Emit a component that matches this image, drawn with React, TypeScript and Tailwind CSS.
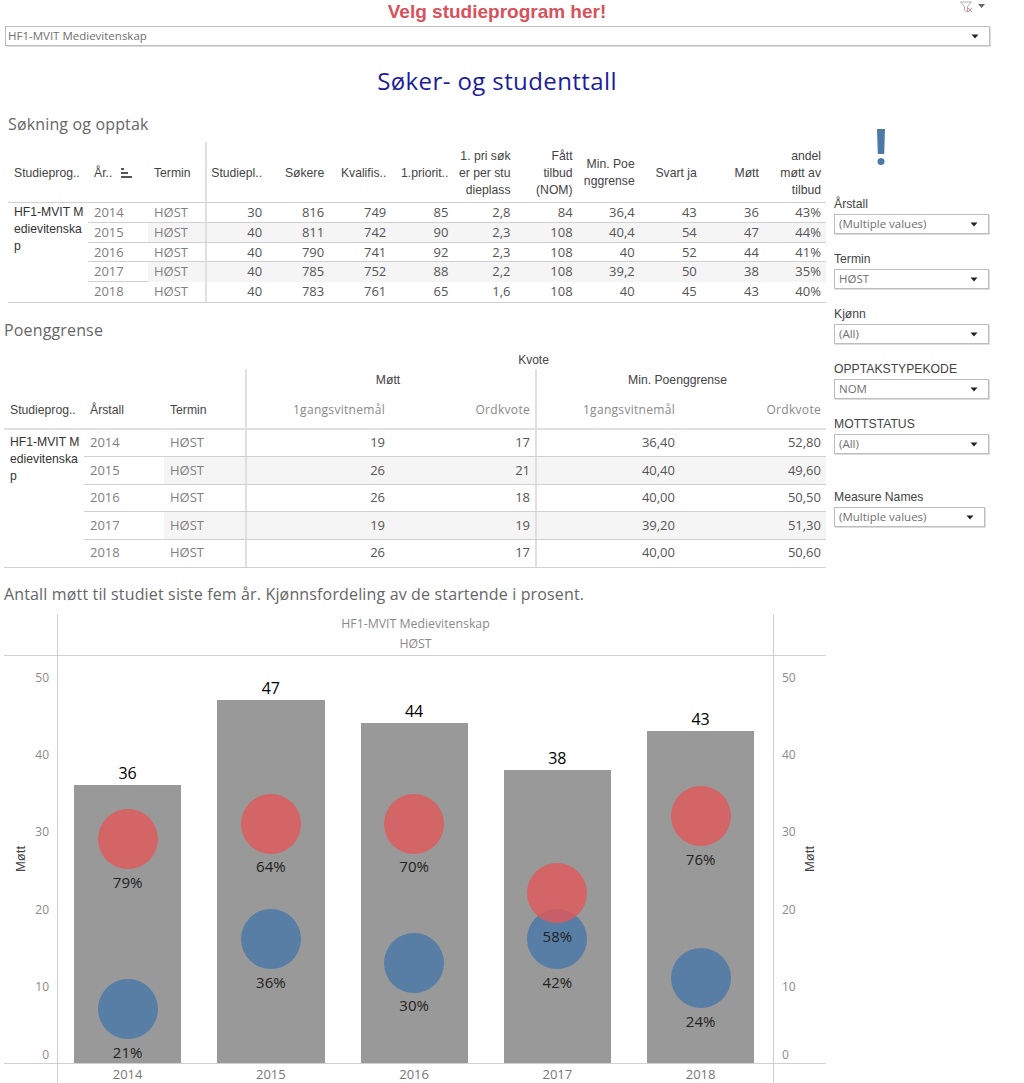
const years = ["2014", "2015", "2016", "2017", "2018"];

const intake = [
  ["30", "816", "749", "85", "2,8", "84", "36,4", "43", "36", "43%"],
  ["40", "811", "742", "90", "2,3", "108", "40,4", "54", "47", "44%"],
  ["40", "790", "741", "92", "2,3", "108", "40", "52", "44", "41%"],
  ["40", "785", "752", "88", "2,2", "108", "39,2", "50", "38", "35%"],
  ["40", "783", "761", "65", "1,6", "108", "40", "45", "43", "40%"],
];

const intakeHeads = [
  "Studiepl..",
  "Søkere",
  "Kvalifis..",
  "1.priorit..",
  "1. pri søk\ner per stu\ndieplass",
  "Fått\ntilbud\n(NOM)",
  "Min. Poe\nnggrense",
  "Svart ja",
  "Møtt",
  "andel\nmøtt av\ntilbud",
];

const limits = [
  ["19", "17", "36,40", "52,80"],
  ["26", "21", "40,40", "49,60"],
  ["26", "18", "40,00", "50,50"],
  ["19", "19", "39,20", "51,30"],
  ["26", "17", "40,00", "50,60"],
];

const bars = [
  { year: "2014", total: 36, red: 29, blue: 7, redPct: "79%", bluePct: "21%" },
  { year: "2015", total: 47, red: 31, blue: 16, redPct: "64%", bluePct: "36%" },
  { year: "2016", total: 44, red: 31, blue: 13, redPct: "70%", bluePct: "30%" },
  { year: "2017", total: 38, red: 22, blue: 16, redPct: "58%", bluePct: "42%" },
  { year: "2018", total: 43, red: 32, blue: 11, redPct: "76%", bluePct: "24%" },
];

const UNIT = 7.72;

function Caret() {
  return (
    <svg width="8" height="5" viewBox="0 0 8 5" className="shrink-0">
      <path d="M0.5 0.5h7L4 4.5z" fill="#222" />
    </svg>
  );
}

function Select({ value, className }: { value: string; className: string }) {
  return (
    <div
      className={`flex h-5 items-center justify-between border border-[#bdbdbd] pl-1 pr-[10px] text-[11.5px] text-[#707070] shadow-[1px_1px_0_#ddd] font-['Open_Sans',sans-serif] ${className}`}
    >
      <span>{value}</span>
      <Caret />
    </div>
  );
}

function Filter({ label, value, className = "w-[155px]" }: { label: string; value: string; className?: string }) {
  return (
    <div className="mb-[15px]">
      <div className="flex h-5 items-center text-[12.2px] text-[#444]">{label}</div>
      <Select value={value} className={className} />
    </div>
  );
}

function SectionTitle({ children }: { children: string }) {
  return (
    <h2 className="flex h-6 items-center text-[16px] tracking-[0.15px] text-[#666] font-['Open_Sans',sans-serif]">
      {children}
    </h2>
  );
}

function IntakeTable() {
  return (
    <div className="ml-2 flex w-[818px] flex-col border-b border-[#d0d0d0] text-[12.2px]">
      <div className="grid h-[61px] grid-cols-[80px_60px_57px_repeat(10,1fr)] items-center border-b border-[#d0d0d0] text-[#444]">
        <div className="pl-[6px] pt-[2px]">Studieprog..</div>
        <div className="flex items-center gap-[9px] pl-[6px] pt-[2px]">
          År..
          <svg width="11" height="10" viewBox="0 0 11 10">
            <path d="M0 0h3v2H0zM0 4h7v2H0zM0 8h11v2H0z" fill="#555" />
          </svg>
        </div>
        <div className="pl-[6px] pt-[2px]">Termin</div>
        {intakeHeads.map((head, i) => (
          <div
            key={head}
            className={`flex h-full items-center justify-end whitespace-pre-line pr-[5px] pt-[2px] text-right leading-[17px] ${
              i === 0 ? "border-l-2 border-[#e0e0e0]" : ""
            }`}
          >
            {head}
          </div>
        ))}
      </div>
      <div className="flex">
        <div className="w-[80px] pl-[6px] pt-[1px] leading-[17px] text-[#333]">
          HF1-MVIT M
          <br />
          edievitenska
          <br />p
        </div>
        <div className="flex-1">
          {intake.map((row, r) => (
            <div
              key={years[r]}
              className={`grid h-[19.8px] grid-cols-[60px_57px_repeat(10,1fr)] items-center text-[13px] font-['Open_Sans',sans-serif] ${
                r < 4 ? "border-b border-[#d0d0d0]" : ""
              }`}
            >
              <div className="pl-[6px] text-[#808080]">{years[r]}</div>
              <div className={`flex h-full items-center pl-[6px] text-[#808080] ${r % 2 ? "bg-[#f5f5f5]" : ""}`}>HØST</div>
              {row.map((cell, c) => (
                <div
                  key={c}
                  className={`flex h-full items-center justify-end pr-[5px] text-[#555] ${r % 2 ? "bg-[#f5f5f5]" : ""} ${
                    c === 0 ? "border-l-2 border-[#e0e0e0]" : ""
                  }`}
                >
                  {cell}
                </div>
              ))}
            </div>
          ))}
        </div>
      </div>
    </div>
  );
}

function LimitTable() {
  return (
    <div className="ml-1 w-[822px] text-[12.2px] text-[#444]">
      <div className="flex h-[18px] items-center pl-[237px]">
        <div className="flex-1 text-center text-[12px]">Kvote</div>
      </div>
      <div className="grid h-[61px] grid-cols-[80px_80px_81px_145px_145px_145px_146px] grid-rows-[22px_39px] border-b-2 border-[#e0e0e0]">
        <div className="col-start-4 col-span-2 flex items-center justify-center border-l-2 border-[#e0e0e0] pr-[6px]">Møtt</div>
        <div className="col-span-2 flex items-center justify-center border-l-2 border-[#e0e0e0] pr-[8px]">Min. Poenggrense</div>
        <div className="col-start-1 row-start-2 flex items-center pl-[6px]">Studieprog..</div>
        <div className="row-start-2 flex items-center pl-[6px]">Årstall</div>
        <div className="row-start-2 flex items-center pl-[6px]">Termin</div>
        {["1gangsvitnemål", "Ordkvote", "1gangsvitnemål", "Ordkvote"].map((head, i) => (
          <div
            key={i}
            className={`row-start-2 flex items-center justify-end pr-[5px] text-[12px] tracking-[0.3px] text-[#888] font-['Open_Sans',sans-serif] ${
              i % 2 === 0 ? "border-l-2 border-[#e0e0e0]" : ""
            }`}
          >
            {head}
          </div>
        ))}
      </div>
      <div className="flex border-b border-[#d0d0d0]">
        <div className="w-[80px] pl-[6px] pt-[4px] leading-[17px] text-[#333]">
          HF1-MVIT M
          <br />
          edievitenska
          <br />p
        </div>
        <div className="flex-1">
          {limits.map((row, r) => (
            <div
              key={years[r]}
              className={`grid h-[27.4px] grid-cols-[80px_81px_145px_145px_145px_146px] items-center text-[13px] font-['Open_Sans',sans-serif] ${
                r < 4 ? "border-b border-[#d0d0d0]" : ""
              }`}
            >
              <div className="pl-[6px] text-[#808080]">{years[r]}</div>
              <div className={`flex h-full items-center pl-[6px] text-[#808080] ${r % 2 ? "bg-[#f5f5f5]" : ""}`}>HØST</div>
              {row.map((cell, c) => (
                <div
                  key={c}
                  className={`flex h-full items-center justify-end pr-[5px] text-[#555] ${r % 2 ? "bg-[#f5f5f5]" : ""} ${
                    c % 2 === 0 ? "border-l-2 border-[#e0e0e0]" : ""
                  }`}
                >
                  {cell}
                </div>
              ))}
            </div>
          ))}
        </div>
      </div>
    </div>
  );
}

function Ticks({ className }: { className: string }) {
  return (
    <div className={`flex flex-col gap-[57.2px] pt-3 text-[12px] text-[#8a8a8a] font-['Open_Sans',sans-serif] ${className}`}>
      {["50", "40", "30", "20", "10"].map((t) => (
        <div key={t} className="flex h-5 shrink-0 items-center">
          {t}
        </div>
      ))}
      <div className="-mt-[9px] flex h-5 shrink-0 items-center">0</div>
    </div>
  );
}

function AxisTitle() {
  return <div className="rotate-180 text-[13px] text-[#444] [writing-mode:vertical-rl]">Møtt</div>;
}

function Bubble({ value, pct, color }: { value: number; pct: string; color: string }) {
  return (
    <>
      <div
        className={`absolute left-1/2 h-[60px] w-[60px] -translate-x-1/2 rounded-full ${color}`}
        style={{ bottom: value * UNIT - 30 }}
      />
      <div
        className="absolute left-0 right-0 flex h-5 items-center justify-center text-[15px] text-[#222] font-['Open_Sans',sans-serif]"
        style={{ bottom: value * UNIT - 53 }}
      >
        {pct}
      </div>
    </>
  );
}

function Chart() {
  return (
    <div className="ml-1 grid w-[822px] grid-cols-[53px_717px_52px] grid-rows-[42px_408px_20px]">
      <div className="border-b border-[#d0d0d0]" />
      <div className="flex flex-col items-center justify-center border-x border-b border-[#d0d0d0] text-[12.3px] leading-5 text-[#8a8a8a] font-['Open_Sans',sans-serif]">
        <div>HF1-MVIT Medievitenskap</div>
        <div>HØST</div>
      </div>
      <div className="border-b border-[#d0d0d0]" />

      <div className="flex justify-between border-b border-[#d0d0d0]">
        <div className="flex items-center pl-[7px]">
          <AxisTitle />
        </div>
        <Ticks className="items-end pr-2" />
      </div>
      <div className="flex items-end gap-[36px] border-x border-b border-[#d0d0d0] pl-[16px]">
        {bars.map((bar) => (
          <div
            key={bar.year}
            className="relative w-[107.25px] bg-[#999999]"
            style={{ height: bar.total * UNIT }}
          >
            <div className="absolute bottom-full left-0 right-0 mb-[2px] text-center text-[16px] leading-5 text-black font-['Open_Sans',sans-serif]">
              {bar.total}
            </div>
            <Bubble value={bar.blue} pct={bar.bluePct} color="bg-[#4e79a7]/85" />
            <Bubble value={bar.red} pct={bar.redPct} color="bg-[#e15759]/80" />
          </div>
        ))}
      </div>
      <div className="flex justify-between border-b border-[#d0d0d0]">
        <Ticks className="pl-2" />
        <div className="flex items-center pr-[7px]">
          <AxisTitle />
        </div>
      </div>

      <div />
      <div className="flex gap-[36px] border-x border-[#d0d0d0] pl-[16px] text-[13px] text-[#777] font-['Open_Sans',sans-serif]">
        {years.map((y) => (
          <div key={y} className="flex h-5 w-[107.25px] items-center justify-center pt-[2px]">
            {y}
          </div>
        ))}
      </div>
      <div />
    </div>
  );
}

export default function App() {
  return (
    <div className="relative h-[1083px] w-[1024px] overflow-hidden bg-white font-['Liberation_Sans',sans-serif]">
      <h1 className="mb-[2px] flex h-[24px] w-[994px] items-center justify-center text-[19px] font-bold text-[#d9515a]">
        Velg studieprogram her!
      </h1>
      <svg width="26" height="12" viewBox="0 0 26 12" className="absolute left-[960px] top-[1px]">
        <path d="M0.5 1h11L7.5 5.5V11L4.5 9V5.5z" fill="none" stroke="#aaa" />
        <path d="M8 7l4 4M12 7l-4 4" stroke="#d88" />
        <path d="M18 3h7l-3.5 4z" fill="#666" />
      </svg>
      <Select value="HF1-MVIT Medievitenskap" className="ml-[5px] w-[985px] pl-[2px] pr-[9px]" />

      <div className="flex h-[66px] w-[994px] items-center justify-center pt-[4px] text-[24px] tracking-[0.4px] text-[#1d1d9b] font-['Open_Sans',sans-serif]">
        Søker- og studenttall
      </div>

      <div className="flex">
        <div className="w-[826px]">
          <div className="pl-2">
            <SectionTitle>Søkning og opptak</SectionTitle>
          </div>
          <div className="mt-[6px]">
            <IntakeTable />
          </div>
          <div className="mt-[15px] pl-1">
            <SectionTitle>Poenggrense</SectionTitle>
          </div>
          <div className="mt-[9px]">
            <LimitTable />
          </div>
          <div className="mt-[14px] pl-1">
            <SectionTitle>Antall møtt til studiet siste fem år. Kjønnsfordeling av de startende i prosent.</SectionTitle>
          </div>
          <div className="mt-2">
            <Chart />
          </div>
        </div>

        <div className="ml-2 w-[155px] pt-[17px]">
          <svg width="8" height="36" viewBox="0 0 8 36" className="ml-[43px] mb-[29px]">
            <path d="M0 0h8L7.2 25H.8z" fill="#4e79a7" />
            <circle cx="4" cy="32.5" r="3.5" fill="#4e79a7" />
          </svg>
          <Filter label="Årstall" value="(Multiple values)" />
          <Filter label="Termin" value="HØST" />
          <Filter label="Kjønn" value="(All)" />
          <Filter label="OPPTAKSTYPEKODE" value="NOM" />
          <Filter label="MOTTSTATUS" value="(All)" />
          <div className="mt-[33px]">
            <Filter label="Measure Names" value="(Multiple values)" className="w-[151px]" />
          </div>
        </div>
      </div>
    </div>
  );
}
